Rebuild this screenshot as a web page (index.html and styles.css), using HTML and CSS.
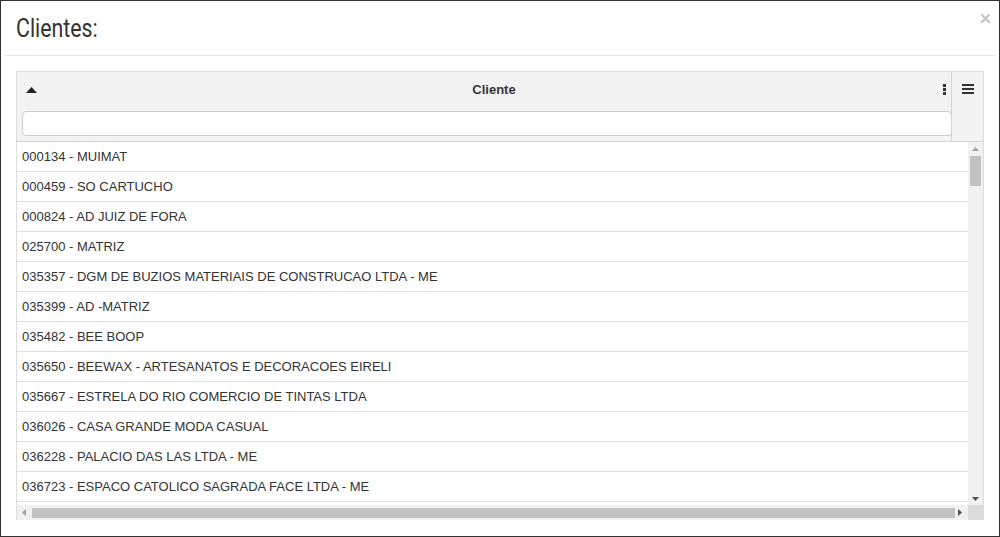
FILE: index.html
```html
<!DOCTYPE html>
<html>
<head>
<meta charset="utf-8">
<link rel="stylesheet" href="styles.css">
</head>
<body>
<div class="modal">
  <div class="modal-header">
    <h4 class="title">Clientes:</h4>
    <svg class="close" width="9" height="9" viewBox="0 0 9 9"><path d="M1 1 L8 8 M8 1 L1 8" stroke="#c4c4c4" stroke-width="2.2" stroke-linecap="square"/></svg>
  </div>
  <div class="modal-body">
    <div class="grid">
      <div class="grid-head">
        <div class="col-head">
          <div class="col-top">
            <svg class="sort" width="11" height="6" viewBox="0 0 11 6"><path d="M0 6 L5.5 0 L11 6 Z" fill="#222"/></svg>
            <span class="col-label">Cliente</span>
            <svg class="dots" width="3" height="11" viewBox="0 0 3 11"><rect x="0" y="0" width="3" height="3" fill="#333"/><rect x="0" y="4" width="3" height="3" fill="#333"/><rect x="0" y="8" width="3" height="3" fill="#333"/></svg>
          </div>
          <div class="filter"><input class="filter-input" type="text"></div>
        </div>
        <div class="menu-col">
          <svg width="12" height="10" viewBox="0 0 12 10"><rect x="0" y="0" width="12" height="2" fill="#333"/><rect x="0" y="4" width="12" height="2" fill="#333"/><rect x="0" y="8" width="12" height="2" fill="#333"/></svg>
        </div>
      </div>
      <div class="grid-body">
        <div class="rows">
          <div class="row">000134 - MUIMAT</div>
          <div class="row">000459 - SO CARTUCHO</div>
          <div class="row">000824 - AD JUIZ DE FORA</div>
          <div class="row">025700 - MATRIZ</div>
          <div class="row">035357 - DGM DE BUZIOS MATERIAIS DE CONSTRUCAO LTDA - ME</div>
          <div class="row">035399 - AD -MATRIZ</div>
          <div class="row">035482 - BEE BOOP</div>
          <div class="row">035650 - BEEWAX - ARTESANATOS E DECORACOES EIRELI</div>
          <div class="row">035667 - ESTRELA DO RIO COMERCIO DE TINTAS LTDA</div>
          <div class="row">036026 - CASA GRANDE MODA CASUAL</div>
          <div class="row">036228 - PALACIO DAS LAS LTDA - ME</div>
          <div class="row">036723 - ESPACO CATOLICO SAGRADA FACE LTDA - ME</div>
          <div class="row partial"></div>
        </div>
        <div class="vscroll">
          <svg class="arrow" width="7" height="4" viewBox="0 0 7 4"><path d="M0 4 L3.5 0 L7 4 Z" fill="#a3a3a3"/></svg>
          <div class="vtrack"><div class="vthumb"></div></div>
          <svg class="arrow" width="7" height="4" viewBox="0 0 7 4"><path d="M0 0 L3.5 4 L7 0 Z" fill="#505050"/></svg>
        </div>
      </div>
      <div class="grid-foot">
        <div class="hscroll">
          <svg class="harrow" width="4" height="7" viewBox="0 0 4 7"><path d="M4 0 L0 3.5 L4 7 Z" fill="#a3a3a3"/></svg>
          <div class="htrack"><div class="hthumb"></div></div>
          <svg class="harrow" width="4" height="7" viewBox="0 0 4 7"><path d="M0 0 L4 3.5 L0 7 Z" fill="#505050"/></svg>
        </div>
        <div class="corner"></div>
      </div>
    </div>
  </div>
</div>
</body>
</html>
```
FILE: styles.css
```css
* { box-sizing: border-box; }
html, body { margin: 0; padding: 0; background: #fff; }
body { width: 1000px; height: 537px; overflow: hidden; }
.modal {
  width: 1000px;
  height: 537px;
  border: 1px solid #333;
  background: #fff;
  display: flex;
  flex-direction: column;
}
.modal-header {
  height: 55px;
  border-bottom: 1px solid #e5e5e5;
  margin: 0 4px;
  display: flex;
  align-items: flex-start;
  justify-content: space-between;
  padding: 0 0 0 11px;
}
.title {
  margin: 0;
  padding-top: 12px;
  font-family: Roboto, "Liberation Sans", sans-serif;
  font-weight: 400;
  font-size: 26px;
  line-height: 30px;
  color: #333;
  transform: scaleX(0.82);
  transform-origin: left top;
}
.close {
  flex: none;
  margin-top: 13px;
  margin-right: 5px;
}
.modal-body {
  padding: 15px 15px 0 15px;
}
.grid {
  width: 968px;
  border: 1px solid #ddd;
  border-bottom: none;
  font-family: "Liberation Sans", Arial, sans-serif;
  font-size: 13px;
  color: #333;
}
.grid-head {
  display: flex;
  background: #f3f3f3;
  border-bottom: 1px solid #d4d4d4;
  height: 70px;
}
.col-head {
  width: 934px;
  display: flex;
  flex-direction: column;
}
.col-top {
  height: 37px;
  display: flex;
  align-items: center;
  padding: 0 5px 2px 9px;
}
.sort { flex: none; margin-top: 1px; }
.col-label {
  flex: 1;
  text-align: center;
  font-weight: 700;
  padding-left: 8px;
}
.dots { flex: none; }
.filter {
  padding: 2px 0 0 5px;
}
.filter-input {
  display: block;
  width: 930px;
  height: 25px;
  border: 1px solid #ccc;
  border-radius: 4px;
  background: #fff;
  margin: 0;
  padding: 0;
}
.menu-col {
  flex: 1;
  border-left: 1px solid #d4d4d4;
  height: 69px;
  display: flex;
  justify-content: center;
  padding-top: 12px;
}
.grid-body {
  display: flex;
  height: 363px;
  overflow: hidden;
}
.rows {
  flex: 1;
  overflow: hidden;
}
.row {
  height: 30px;
  border-bottom: 1px solid #e0e0e0;
  padding: 0 5px;
  line-height: 29px;
  white-space: nowrap;
  background: #fff;
}
.vscroll {
  width: 15px;
  background: #f1f1f1;
  display: flex;
  flex-direction: column;
  align-items: center;
  padding: 5px 0 4px 0;
}
.arrow { flex: none; }
.vtrack {
  flex: 1;
  width: 100%;
  padding: 5px 2px 0 2px;
}
.vthumb {
  height: 30px;
  background: #c1c1c1;
}
.grid-foot {
  display: flex;
  height: 15px;
}
.hscroll {
  flex: 1;
  background: #f1f1f1;
  display: flex;
  align-items: center;
  padding: 0 6px 0 5px;
}
.harrow { flex: none; }
.htrack {
  flex: 1;
  height: 15px;
  padding: 3px 3px 2px 6px;
}
.hthumb {
  height: 10px;
  background: #c1c1c1;
}
.corner {
  width: 15px;
  background: #dcdcdc;
}
```
